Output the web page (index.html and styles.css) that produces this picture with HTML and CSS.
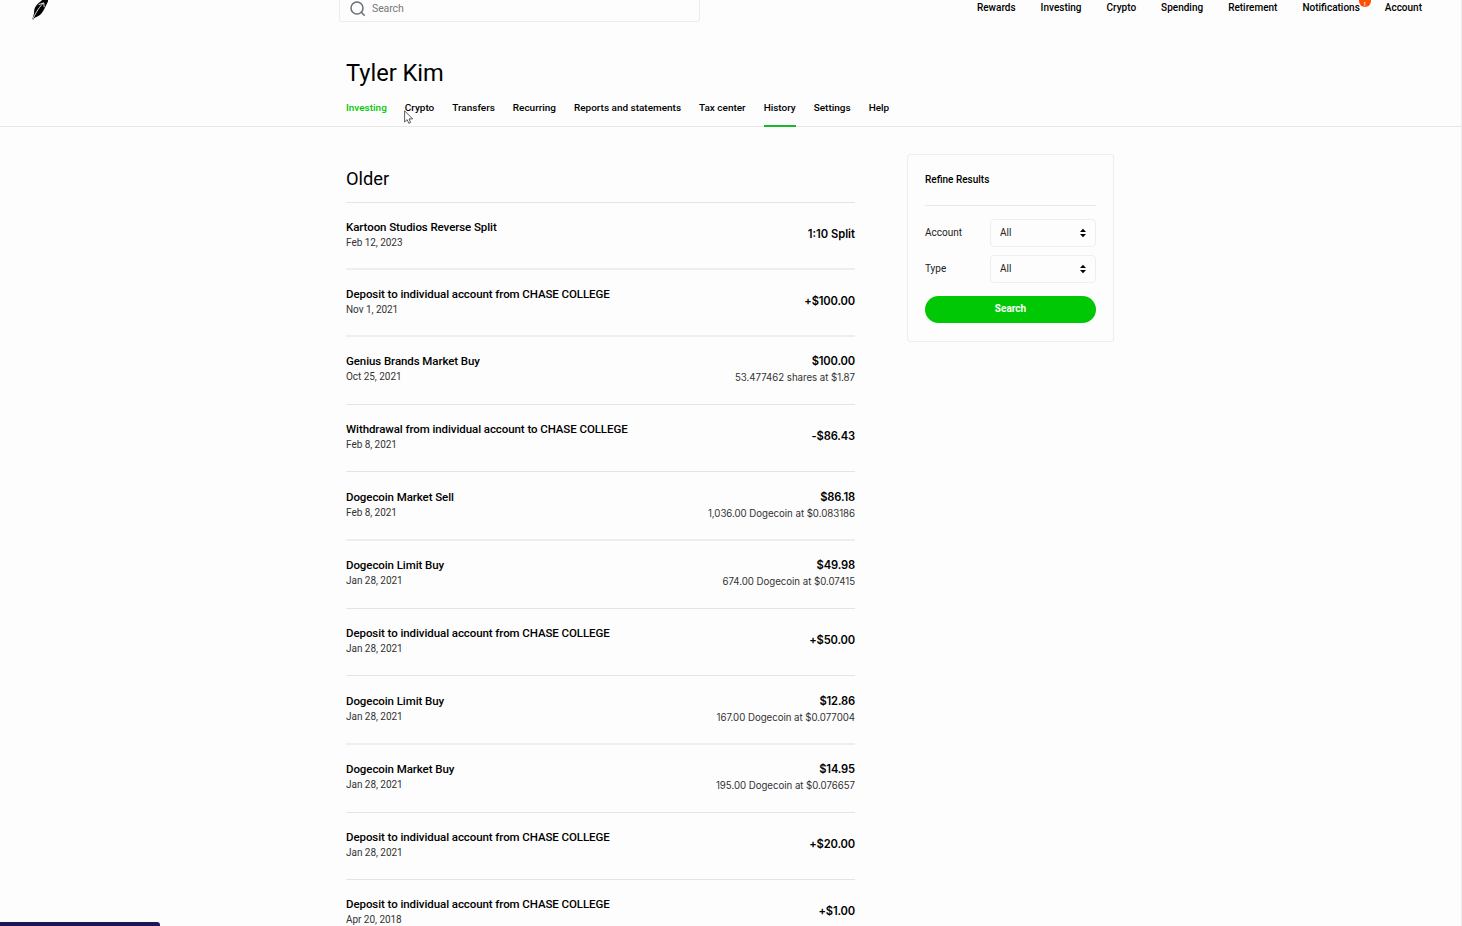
FILE: index.html
```html
<!DOCTYPE html>
<html lang="en">
<head>
<meta charset="utf-8">
<title>History</title>
<link rel="stylesheet" href="styles.css">
</head>
<body>
<div class="page">
<header class="topbar">
  <a class="logo"><svg width="18" height="22" viewBox="0 0 18 22"><path d="M1.6 19 C2.5 16 4.5 12 6 10 C6 13.5 5.2 15.5 3.8 17.3z" fill="#555"/><path d="M3 13.5 C3 7.5 5 5 9 2 C11 0 13 -2 17 -2 L17 1.5 C14.5 6 13.5 9.5 10.6 13.3 C8.5 15.8 6 17 3.9 17.4 L2.3 19.4 L1.3 19.2z" fill="#000"/><path d="M1.9 19 C4 14.5 6.5 9 12.2 3.2 M7.6 4.6 L12.8 2.9 L13.2 7.2" fill="none" stroke="#fdfdfd" stroke-width=".9"/></svg></a>
  <div class="searchbox"><svg width="16" height="16" viewBox="0 0 16 16" fill="none" stroke="#6a7075" stroke-width="1.5"><circle cx="7" cy="7" r="6"/><path d="M11.1 11.1L14.6 14.8"/></svg><span>Search</span></div>
  <nav class="mainnav"><a>Rewards</a><a>Investing</a><a>Crypto</a><a>Spending</a><a>Retirement</a><a class="notify">Notifications<i class="badge">!</i></a><a>Account</a></nav>
</header>
<section class="profile">
  <h1>Tyler Kim</h1>
  <nav class="tabs"><a class="lit">Investing</a><a>Crypto</a><a>Transfers</a><a>Recurring</a><a>Reports and statements</a><a>Tax center</a><a class="active">History</a><a>Settings</a><a>Help</a></nav>
</section>
<main class="content">
  <section class="history">
    <h2>Older</h2>
    <div class="row h66"><div><h3>Kartoon Studios Reverse Split</h3><p>Feb 12, 2023</p></div><div class="amount"><b>1:10 Split</b></div></div>
    <div class="row soft h67"><div><h3>Deposit to individual account from CHASE COLLEGE</h3><p>Nov 1, 2021</p></div><div class="amount"><b>+$100.00</b></div></div>
    <div class="row soft h69"><div><h3>Genius Brands Market Buy</h3><p>Oct 25, 2021</p></div><div class="amount"><b>$100.00</b><span>53.477462 shares at $1.87</span></div></div>
    <div class="row h67"><div><h3>Withdrawal from individual account to CHASE COLLEGE</h3><p>Feb 8, 2021</p></div><div class="amount"><b>-$86.43</b></div></div>
    <div class="row h68"><div><h3>Dogecoin Market Sell</h3><p>Feb 8, 2021</p></div><div class="amount"><b>$86.18</b><span>1,036.00 Dogecoin at $0.083186</span></div></div>
    <div class="row soft h69"><div><h3>Dogecoin Limit Buy</h3><p>Jan 28, 2021</p></div><div class="amount"><b>$49.98</b><span>674.00 Dogecoin at $0.07415</span></div></div>
    <div class="row h67"><div><h3>Deposit to individual account from CHASE COLLEGE</h3><p>Jan 28, 2021</p></div><div class="amount"><b>+$50.00</b></div></div>
    <div class="row h68"><div><h3>Dogecoin Limit Buy</h3><p>Jan 28, 2021</p></div><div class="amount"><b>$12.86</b><span>167.00 Dogecoin at $0.077004</span></div></div>
    <div class="row soft h69"><div><h3>Dogecoin Market Buy</h3><p>Jan 28, 2021</p></div><div class="amount"><b>$14.95</b><span>195.00 Dogecoin at $0.076657</span></div></div>
    <div class="row h67"><div><h3>Deposit to individual account from CHASE COLLEGE</h3><p>Jan 28, 2021</p></div><div class="amount"><b>+$20.00</b></div></div>
    <div class="row h67"><div><h3>Deposit to individual account from CHASE COLLEGE</h3><p>Apr 20, 2018</p></div><div class="amount"><b>+$1.00</b></div></div>
  </section>
  <aside class="refine">
    <h4>Refine Results</h4>
    <div class="field"><label>Account</label><div class="select"><span>All</span><svg width="6" height="10" viewBox="0 0 6 10"><path d="M0 4L3 .7L6 4zM0 6L3 9.3L6 6z"/></svg></div></div>
    <div class="field"><label>Type</label><div class="select"><span>All</span><svg width="6" height="10" viewBox="0 0 6 10"><path d="M0 4L3 .7L6 4zM0 6L3 9.3L6 6z"/></svg></div></div>
    <button class="submit">Search</button>
  </aside>
</main>
</div>
<svg class="cursor" width="10" height="15" viewBox="0 0 10 15"><path d="M.6 .8V12L3.1 9.6L4.8 13.3L6.6 12.5L5 8.9H8.6z" fill="#fff" stroke="#333" stroke-width=".8"/></svg>
<div class="status"></div>
</body>
</html>
```

FILE: styles.css
```css
* { box-sizing: border-box; margin: 0; padding: 0; }
body { font-family: Roboto, "Liberation Sans", sans-serif; background: #fdfdfd; color: #000; height: 926px; overflow: hidden; }
.page { height: 926px; overflow: hidden; border-right: 1px solid #ebebeb; }
.topbar { height: 22px; display: flex; align-items: flex-start; }
.logo { width: 339px; padding-left: 31px; }
.logo svg { display: block; }
.searchbox { width: 361px; height: 22px; border: 1px solid #ececec; border-top: 0; border-radius: 0 0 3px 3px; display: flex; gap: 6px; padding: 1px 0 0 10px; font-size: 10.5px; line-height: 15px; color: #777; }
.searchbox span { letter-spacing: -.1px; }
.mainnav { margin-left: auto; padding-right: 39px; display: flex; gap: 25px; font-size: 10px; font-weight: 500; line-height: 16px; }
.notify { position: relative; }
.badge { position: absolute; right: -11px; top: -5px; width: 12px; height: 12px; padding-top: 5px; border-radius: 50%; background: #ff5000; color: #fff; font-size: 6px; line-height: 7px; text-align: center; font-style: normal; font-weight: 700; }
.profile { height: 105px; padding: 37px 0 0 346px; border-bottom: 1px solid #e8e8e8; }
h1 { font-size: 23.6px; line-height: 28px; font-weight: 400; }
.tabs { display: flex; gap: 18px; margin-top: 13px; height: 27px; font-size: 9.97px; line-height: 16px; font-weight: 500; }
.lit { color: #00c805; }
.active { border-bottom: 2px solid #18b92a; }
.content { display: flex; align-items: flex-start; gap: 52px; padding: 27px 0 0 346px; }
.history { width: 509px; }
h2 { height: 48px; padding-top: 14px; font-size: 18.3px; line-height: 22px; font-weight: 400; }
.row { border-top: 1px solid #e4e4e4; display: flex; justify-content: space-between; padding-top: 17px; }
.soft { border-top: 2px solid #eee; }
.h66 { height: 66px; }
.h67 { height: 67px; }
.h68 { height: 68px; padding-top: 18px; }
.h69 { height: 69px; }
h3 { font-size: 11.5px; line-height: 15px; font-weight: 500; letter-spacing: -.08px; }
.row p { font-size: 10px; line-height: 15px; color: #333; letter-spacing: -.04px; }
.amount { text-align: right; font-family: Inter, Roboto, sans-serif; }
.amount b { display: block; font-size: 11.2px; line-height: 15px; font-weight: 600; letter-spacing: -.16px; }
.amount b:only-child { padding-top: 7px; }
.h66 .amount b:only-child { letter-spacing: 0; }
.amount span { display: block; font-size: 9.7px; line-height: 15px; margin-top: 1px; color: #333; letter-spacing: -.04px; }
.refine { width: 207px; height: 188px; border: 1px solid #eee; border-radius: 3px; padding: 0 17px; font-size: 10px; }
h4 { height: 51px; padding-top: 17px; border-bottom: 1px solid #e9e9e9; font-size: 10px; line-height: 16px; font-weight: 500; margin-bottom: 13px; }
.field { display: flex; justify-content: space-between; align-items: center; height: 28px; margin-bottom: 8px; color: #222; }
.field label { padding-bottom: 2px; }
.select { width: 106px; height: 28px; padding: 0 9px; border: 1px solid #eee; border-radius: 4px; display: flex; align-items: center; justify-content: space-between; }
.select span { padding-bottom: 2px; }
.submit { display: block; width: 171px; height: 27px; margin-top: 13px; border: 0; border-radius: 14px; background: #00c805; color: #fff; font: 700 10px/25px Roboto, sans-serif; padding-bottom: 2px; }
.cursor { position: absolute; left: 404px; top: 110px; }
.status { position: absolute; left: 0; bottom: 0; width: 160px; height: 4px; background: #1d1753; border-top-right-radius: 3px; }
```
